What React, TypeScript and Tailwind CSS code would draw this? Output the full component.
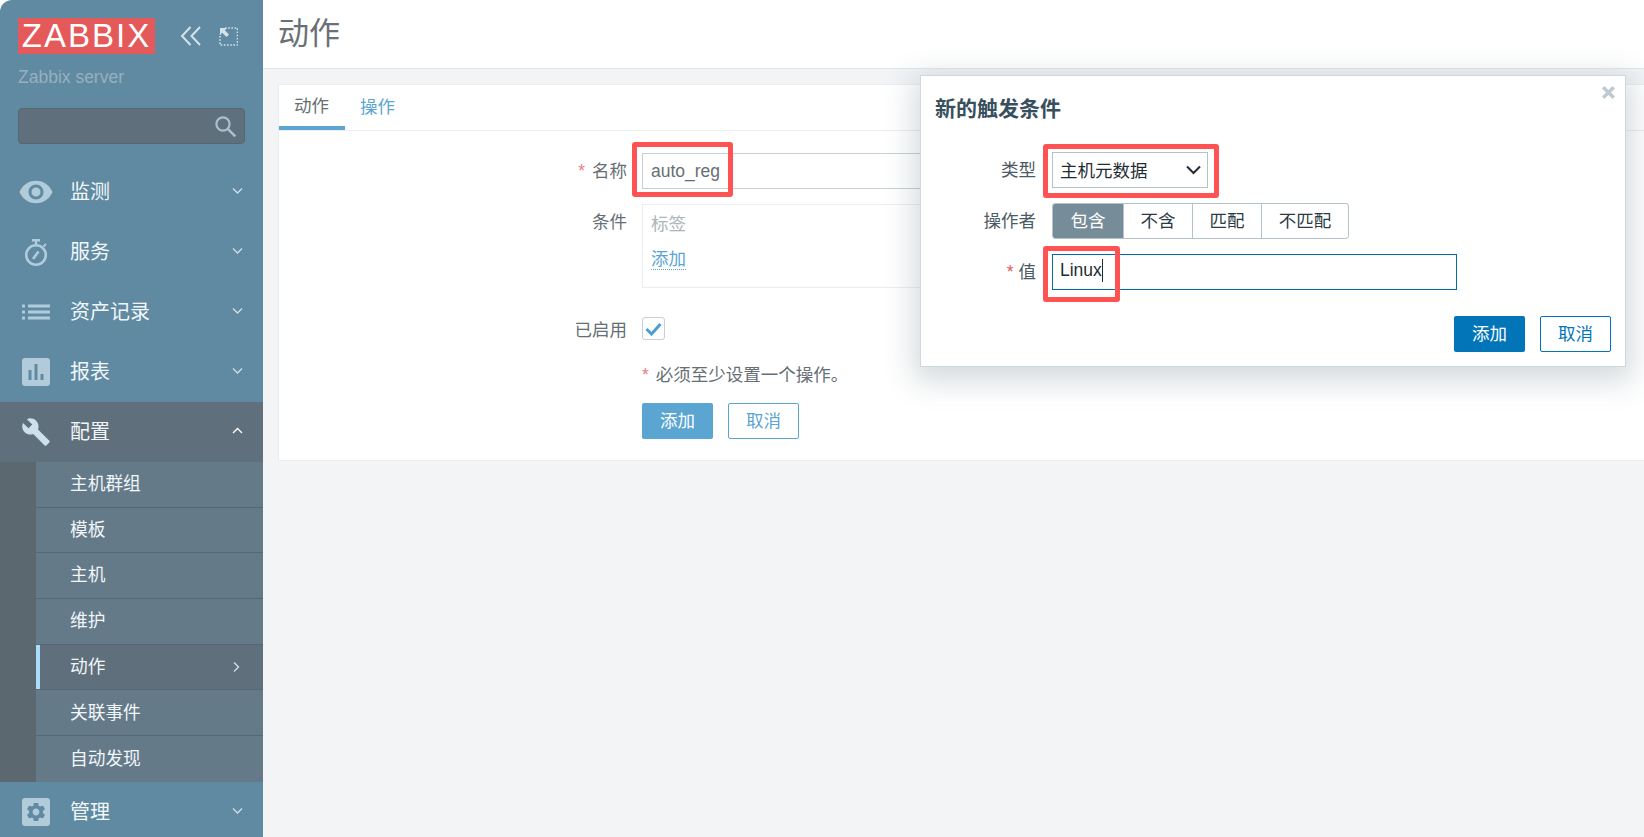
import { MdBuild, MdRemoveRedEye } from "react-icons/md";
import type { ReactNode } from "react";

const cjk = "font-['Liberation_Sans','Noto_Sans_CJK_SC',sans-serif]";

function Chevron({ dir = "down", color = "#cfdde6" }: { dir?: "down" | "up" | "right"; color?: string }) {
  const d = dir === "down" ? "M1 1.5l4.5 4.5L10 1.5" : dir === "up" ? "M1 6l4.5-4.5L10 6" : "M2 0.5l4.5 4.5L2 9.5";
  return (
    <svg width="11" height="10" viewBox="0 0 11 10" fill="none" className="absolute right-[20px] top-1/2 -translate-y-1/2">
      <path d={d} stroke={color} strokeWidth="1.4" />
    </svg>
  );
}

const iconColor = "#b1cbdb";

const EyeIcon = () => <MdRemoveRedEye size={38} color={iconColor} />;

const TimerIcon = () => (
  <svg width="26" height="29" viewBox="0 0 26 29" fill="none" stroke={iconColor} className="translate-x-[1px]">
    <circle cx="12" cy="17" r="9.8" strokeWidth="2.6" />
    <path d="M8 2.2h8M12 2.5v4" strokeWidth="2.4" />
    <path d="M19.5 8.5l2.5-2.5" strokeWidth="2" />
    <path d="M9 21l5.5-7.5" strokeWidth="2.6" />
  </svg>
);

const ListIcon = () => (
  <svg width="28" height="16" viewBox="0 0 28 16" fill={iconColor}>
    <rect x="0" y="0.5" width="3" height="3" rx="0.6" />
    <rect x="0" y="6.5" width="3" height="3" rx="0.6" />
    <rect x="0" y="12.5" width="3" height="3" rx="0.6" />
    <rect x="6" y="0.5" width="22" height="3" />
    <rect x="6" y="6.5" width="22" height="3" />
    <rect x="6" y="12.5" width="22" height="3" />
  </svg>
);

const ReportIcon = () => (
  <svg width="28" height="28" viewBox="0 0 28 28">
    <rect width="28" height="28" rx="3" fill={iconColor} />
    <rect x="6.5" y="12" width="3" height="10" fill="#5f8aa2" />
    <rect x="12.5" y="6" width="3" height="16" fill="#5f8aa2" />
    <rect x="18.5" y="16" width="3" height="6" fill="#5f8aa2" />
  </svg>
);

const WrenchIcon = () => <MdBuild size={30} color="#cde0ec" />;

const GearIcon = () => (
  <svg width="28" height="28" viewBox="0 0 28 28">
    <rect width="28" height="28" rx="3" fill={iconColor} />
    <g transform="translate(2.6 2.6) scale(0.95)">
      <path
        fill="#5f8aa2"
        d="M19.14 12.94c.04-.3.06-.61.06-.94 0-.32-.02-.64-.07-.94l2.03-1.58a.49.49 0 0 0 .12-.61l-1.92-3.32a.488.488 0 0 0-.59-.22l-2.39.96c-.5-.38-1.03-.7-1.62-.94l-.36-2.54a.484.484 0 0 0-.48-.41h-3.84c-.24 0-.43.17-.47.41l-.36 2.54c-.59.24-1.13.57-1.62.94l-2.39-.96c-.22-.08-.47 0-.59.22L2.74 8.87c-.12.21-.08.47.12.61l2.03 1.58c-.05.3-.09.63-.09.94s.02.64.07.94l-2.03 1.58a.49.49 0 0 0-.12.61l1.92 3.32c.12.22.37.29.59.22l2.39-.96c.5.38 1.03.7 1.62.94l.36 2.54c.05.24.24.41.48.41h3.84c.24 0 .44-.17.47-.41l.36-2.54c.59-.24 1.13-.56 1.62-.94l2.39.96c.22.08.47 0 .59-.22l1.92-3.32c.12-.22.07-.47-.12-.61l-2.01-1.58zM12 15.6c-1.98 0-3.6-1.62-3.6-3.6s1.62-3.6 3.6-3.6 3.6 1.62 3.6 3.6-1.62 3.6-3.6 3.6z"
      />
    </g>
  </svg>
);

function MenuItem({ icon, label, open }: { icon: ReactNode; label: string; open?: boolean }) {
  return (
    <div className={`relative flex h-[60px] shrink-0 items-center ${open ? "bg-[#5f6f7b]" : ""}`}>
      <div className="flex w-[71px] shrink-0 justify-center">
        <div className="flex w-[36px] justify-center">{icon}</div>
      </div>
      <span className="-ml-[1px] text-[20px] text-[#f1f6f9]">{label}</span>
      <Chevron dir={open ? "up" : "down"} color={open ? "#ffffff" : "#cfdde6"} />
    </div>
  );
}

const subItems = ["主机群组", "模板", "主机", "维护", "动作", "关联事件", "自动发现"];

function Sidebar() {
  return (
    <aside className="flex h-full w-[263px] shrink-0 flex-col overflow-hidden rounded-tl-[12px] bg-[#5f8aa2]">
      <div className="flex shrink-0 items-center pl-[18px] pt-[18px]">
        <div className="flex h-[36px] w-[137px] items-center justify-center bg-[#e45959] text-[33px] tracking-[2px] text-white">
          ZABBIX
        </div>
        <svg width="22" height="20" viewBox="0 0 22 20" fill="none" stroke="#d4e1e9" strokeWidth="2" className="ml-[25px]">
          <path d="M10.5 1L2 10l8.5 9M20 1l-8.5 9 8.5 9" />
        </svg>
        <svg width="19" height="19" viewBox="0 0 19 19" fill="none" className="ml-[17px]">
          <path d="M6 1h12.5v17H1V7" stroke="#d4e1e9" strokeWidth="1.6" strokeDasharray="1.6 1.6" />
          <path d="M1 1h7L5.8 3.2 10 7.5 7.5 10 3.2 5.8 1 8z" fill="#d4e1e9" />
        </svg>
      </div>
      <div className="mt-[13px] shrink-0 pl-[18px] text-[17.5px] leading-[20px] text-[#97b0c0]">Zabbix server</div>
      <div className="mx-[18px] mt-[21px] flex h-[36px] shrink-0 items-center justify-end rounded-[4px] border border-[#566771] bg-[#5f6f7b] pr-[7px]">
        <svg width="23" height="23" viewBox="0 0 23 23" fill="none" stroke="#a9c0ce">
          <circle cx="9" cy="9" r="6.6" strokeWidth="2.2" />
          <path d="M13.8 13.8l7.5 7.5" strokeWidth="2.6" />
        </svg>
      </div>
      <nav className="mt-[18px] flex shrink-0 flex-col">
        <MenuItem icon={<EyeIcon />} label="监测" />
        <MenuItem icon={<TimerIcon />} label="服务" />
        <MenuItem icon={<ListIcon />} label="资产记录" />
        <MenuItem icon={<ReportIcon />} label="报表" />
        <MenuItem icon={<WrenchIcon />} label="配置" open />
        <div className="flex shrink-0 bg-[#5c686f]">
          <div className="w-[36px] shrink-0" />
          <ul className="flex-1 bg-[#657a89]">
            {subItems.map((name) => (
              <li
                key={name}
                className={`relative flex h-[45.7px] items-center border-b border-[#566874] pl-[34px] text-[17.7px] text-[#f1f6f9] last:border-b-0 ${
                  name === "动作" ? "bg-[#5f6f7b]" : ""
                }`}
              >
                {name === "动作" && <span className="absolute bottom-0 left-0 top-0 w-[4px] bg-[#a9ddfb]" />}
                {name}
                {name === "动作" && <Chevron dir="right" />}
              </li>
            ))}
          </ul>
        </div>
        <MenuItem icon={<GearIcon />} label="管理" />
      </nav>
    </aside>
  );
}

// red annotation drawn over a field
function Mark({ className }: { className: string }) {
  return <span className={`pointer-events-none absolute rounded-[3px] border-[5.5px] border-[#ff5353] ${className}`} />;
}

function Row({ label, required, top = "pt-[5px]", children }: { label?: string; required?: boolean; top?: string; children: ReactNode }) {
  return (
    <div className="flex">
      <div className={`w-[348px] shrink-0 text-right text-[17.5px] leading-[26px] text-[#666f75] ${top}`}>
        {required && <span className="mr-[7px] text-[#e88080]">*</span>}
        {label}
      </div>
      <div className="ml-[15px] flex-1">{children}</div>
    </div>
  );
}

function Page() {
  return (
    <main className="flex min-w-0 flex-1 flex-col bg-[#f2f4f6]">
      <header className="flex h-[69px] shrink-0 items-center border-b border-[#e3e7ea] bg-white pl-[15px] pt-[1px] text-[31px] text-[#6a7176]">
        动作
      </header>
      <section className="ml-[15px] mt-[15px] flex h-[377px] flex-col border border-r-0 border-[#ebeef0] bg-white">
        <div className="flex h-[46px] shrink-0 border-b border-[#ebeef0] text-[17.5px]">
          <div className="flex h-[45px] w-[66px] items-center justify-center border-b-[4px] border-[#5aa5d2] pr-[1px] pt-[1px] text-[#666f75]">动作</div>
          <div className="flex h-[44px] items-center pl-[15px] text-[#5aa5d2]">操作</div>
        </div>
        <div className="flex flex-col pt-[22px]">
          <Row label="名称" required>
            <div className="relative w-[800px]">
              <input
                readOnly
                value="auto_reg"
                className="block h-[36px] w-full border border-[#c5d0d8] px-[8px] text-[17.5px] text-[#666f75] outline-none"
              />
              <Mark className="-left-[10px] -top-[11px] h-[55px] w-[101px]" />
            </div>
          </Row>
          <div className="mt-[15px]">
            <Row label="条件">
              <div className="h-[84px] w-[800px] border border-[#ebeef0] px-[8px] pt-[6px] text-[17.5px] leading-[26px]">
                <div className="text-[#aeb4b8]">标签</div>
                <div className="mt-[9px]">
                  <span className="border-b border-dotted border-[#5aa5d2] text-[#5aa5d2]">添加</span>
                </div>
              </div>
            </Row>
          </div>
          <div className="mt-[26px]">
            <Row label="已启用" top="pt-[3px]">
              <div className="mt-[3px] flex h-[23px] w-[23px] items-center justify-center rounded-[3px] border border-[#c5d0d8]">
                <svg width="17" height="14" viewBox="0 0 17 14" fill="none" stroke="#4c9fd0" strokeWidth="3">
                  <path d="M1.5 7l5 5L15.5 2" />
                </svg>
              </div>
            </Row>
          </div>
          <div className="ml-[363px] mt-[19px] text-[17.5px] leading-[26px] text-[#666f75]">
            <span className="mr-[7px] text-[#e88080]">*</span>必须至少设置一个操作。
          </div>
          <div className="ml-[363px] mt-[15px] flex gap-[15px] text-[17.5px]">
            <button className="h-[36px] w-[71px] rounded-[2px] bg-[#5aa5d2] text-white">添加</button>
            <button className="h-[36px] w-[71px] rounded-[2px] border border-[#5aa5d2] bg-white text-[#5aa5d2]">取消</button>
          </div>
        </div>
      </section>
    </main>
  );
}

const operators = [
  { name: "包含", width: "w-[71px]", on: true },
  { name: "不含", width: "w-[69px]" },
  { name: "匹配", width: "w-[69px]" },
  { name: "不匹配", width: "w-[86px]" },
];

function DialogRow({ label, required, children }: { label: string; required?: boolean; children: ReactNode }) {
  return (
    <div className="flex items-center">
      <div className="w-[115px] shrink-0 text-right text-[17.5px] text-[#4b5a63]">
        {required && <span className="mr-[5px] text-[#e45959]">*</span>}
        {label}
      </div>
      <div className="ml-[16px]">{children}</div>
    </div>
  );
}

function Dialog() {
  return (
    <div className="absolute left-[920px] top-[75px] h-[292px] w-[706px] border border-[#cfd8dd] bg-white shadow-[0_8px_28px_6px_rgba(60,85,100,0.22)]">
      <svg width="13" height="13" viewBox="0 0 13 13" stroke="#bfc9d0" strokeWidth="3.4" className="absolute right-[10px] top-[10px]">
        <path d="M1.2 1.2l10.6 10.6M11.8 1.2L1.2 11.8" />
      </svg>
      <h4 className="pl-[14px] pt-[19px] text-[21px] font-bold leading-[28px] text-[#384f5d]">新的触发条件</h4>
      <div className="mt-[29px] flex flex-col gap-[15px]">
        <DialogRow label="类型">
          <div className="relative flex h-[36px] w-[156px] items-center justify-between border border-[#b5c2ca] pl-[7px] pr-[6px] pt-[3px] text-[17.5px] text-[#1f2c33]">
            主机元数据
            <svg width="15" height="10" viewBox="0 0 15 10" fill="none" stroke="#1f2c33" strokeWidth="2" className="-mt-[4px]">
              <path d="M1 1.5l6.5 6.5L14 1.5" />
            </svg>
            <Mark className="-left-[10px] -top-[9px] h-[54px] w-[176px]" />
          </div>
        </DialogRow>
        <DialogRow label="操作者">
          <div className="flex h-[36px] overflow-hidden rounded-[3px] border border-[#b5c2ca] text-[17.5px] text-[#2c3a42]">
            {operators.map((op) => (
              <div
                key={op.name}
                className={`flex items-center justify-center border-r border-[#b5c2ca] last:border-r-0 ${op.width} ${
                  op.on ? "bg-[#768d99] text-white" : ""
                }`}
              >
                {op.name}
              </div>
            ))}
          </div>
        </DialogRow>
        <DialogRow label="值" required>
          <div className="relative flex h-[36px] w-[405px] items-center border border-[#026ba8] pb-[3px] pl-[7px] text-[17.5px] text-[#1f2c33]">
            Linux
            <span className="h-[23px] w-[1.5px] bg-[#1f2c33]" />
            <Mark className="-left-[10px] -top-[9px] h-[56px] w-[77px]" />
          </div>
        </DialogRow>
      </div>
      <div className="absolute bottom-[14px] right-[14px] flex gap-[15px] text-[17.5px]">
        <button className="h-[36px] w-[71px] rounded-[2px] bg-[#0275b8] text-white">添加</button>
        <button className="h-[36px] w-[71px] rounded-[2px] border border-[#0275b8] bg-white text-[#0275b8]">取消</button>
      </div>
    </div>
  );
}

export default function App() {
  return (
    <div className={`relative flex h-screen w-full overflow-hidden bg-white ${cjk}`}>
      <Sidebar />
      <Page />
      <Dialog />
    </div>
  );
}
